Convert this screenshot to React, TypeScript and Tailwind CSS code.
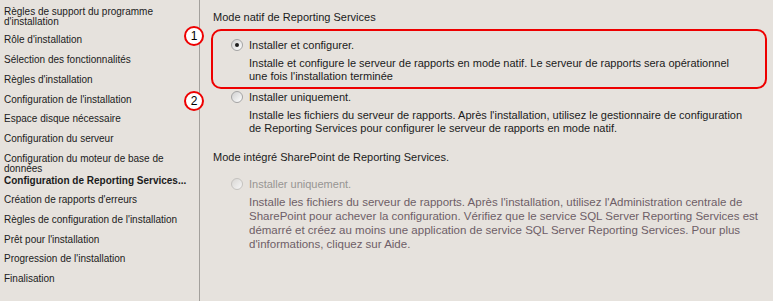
import React from "react";

function Radio({ checked = false, disabled = false }: { checked?: boolean; disabled?: boolean }) {
  return (
    <div
      className={
        disabled
          ? "w-[12px] h-[12px] rounded-full border border-[#c4c2bf] bg-gradient-to-br from-[#d9d7d4] to-[#f6f6f6] flex items-center justify-center shrink-0"
          : "w-[12px] h-[12px] rounded-full border border-[#a4a4a4] bg-gradient-to-br from-[#d0d0d0] to-white flex items-center justify-center shrink-0"
      }
    >
      {checked && <div className="w-[4px] h-[4px] rounded-full bg-[#1e1e1e]" />}
    </div>
  );
}

function Badge({ n, cls }: { n: string; cls: string }) {
  return (
    <div
      className={
        "absolute w-[20px] h-[20px] rounded-full border-2 border-[#ee0000] bg-white flex items-center justify-center text-[12px] leading-none text-black " +
        cls
      }
    >
      {n}
    </div>
  );
}

export default function App() {
  return (
    <div className="relative w-[773px] h-[301px] bg-[#e6e2dd] flex font-['Liberation_Sans',Arial,sans-serif] text-[#1b1b1b] overflow-hidden">
      {/* Sidebar */}
      <div className="w-[200px] shrink-0 border-r border-[#a3a09c] pl-[4px] pt-[7px] text-[10px] leading-[10px] flex flex-col">
        <div>
          Règles de support du programme
          <br />
          d'installation
        </div>
        <div className="mt-[8px]">Rôle d'installation</div>
        <div className="mt-[10px]">Sélection des fonctionnalités</div>
        <div className="mt-[10px]">Règles d'installation</div>
        <div className="mt-[10px]">Configuration de l'installation</div>
        <div className="mt-[9px]">Espace disque nécessaire</div>
        <div className="mt-[10px]">Configuration du serveur</div>
        <div className="mt-[10px]">
          Configuration du moteur de base de
          <br />
          données
        </div>
        <div className="mt-[2px] font-bold">Configuration de Reporting Services...</div>
        <div className="mt-[9px]">Création de rapports d'erreurs</div>
        <div className="mt-[10px]">Règles de configuration de l'installation</div>
        <div className="mt-[10px]">Prêt pour l'installation</div>
        <div className="mt-[9px]">Progression de l'installation</div>
        <div className="mt-[10px]">Finalisation</div>
      </div>

      {/* Main */}
      <div className="flex-1 pl-[11px] pt-[10px] pr-[6px] text-[11px] leading-[14px] flex flex-col">
        <div className="pl-[2px] h-[14px]">Mode natif de Reporting Services</div>

        <div className="mt-[5px] border-2 border-[#ee0000] rounded-[10px] pl-[18px] pt-[7px] h-[60px]">
          <div className="flex items-center gap-[6px] h-[14px]">
            <Radio checked />
            <span>Installer et configurer.</span>
          </div>
          <div className="pl-[18px] mt-[5px] leading-[13px]">
            Installe et configure le serveur de rapports en mode natif. Le serveur de rapports sera opérationnel
            <br />
            une fois l'installation terminée
          </div>
        </div>

        <div className="pl-[20px] mt-[1px]">
          <div className="flex items-center gap-[6px] h-[14px]">
            <Radio />
            <span>Installer uniquement.</span>
          </div>
          <div className="pl-[18px] mt-[5px] leading-[13px]">
            Installe les fichiers du serveur de rapports. Après l'installation, utilisez le gestionnaire de configuration
            <br />
            de Reporting Services pour configurer le serveur de rapports en mode natif.
          </div>
        </div>

        <div className="pl-[2px] mt-[15px] h-[14px]">Mode intégré SharePoint de Reporting Services.</div>

        <div className="pl-[20px] mt-[13px]">
          <div className="flex items-center gap-[6px] h-[14px] text-[#979593]">
            <Radio disabled />
            <span>Installer uniquement.</span>
          </div>
          <div className="pl-[18px] mt-[4px] text-[#6e5e67] text-[11.5px] leading-[14px]">
            Installe les fichiers du serveur de rapports. Après l'installation, utilisez l'Administration centrale de
            <br />
            SharePoint pour achever la configuration. Vérifiez que le service SQL Server Reporting Services est
            <br />
            démarré et créez au moins une application de service SQL Server Reporting Services. Pour plus
            <br />
            d'informations, cliquez sur Aide.
          </div>
        </div>
      </div>

      <Badge n="1" cls="left-[184px] top-[26px]" />
      <Badge n="2" cls="left-[184px] top-[91px]" />
    </div>
  );
}
